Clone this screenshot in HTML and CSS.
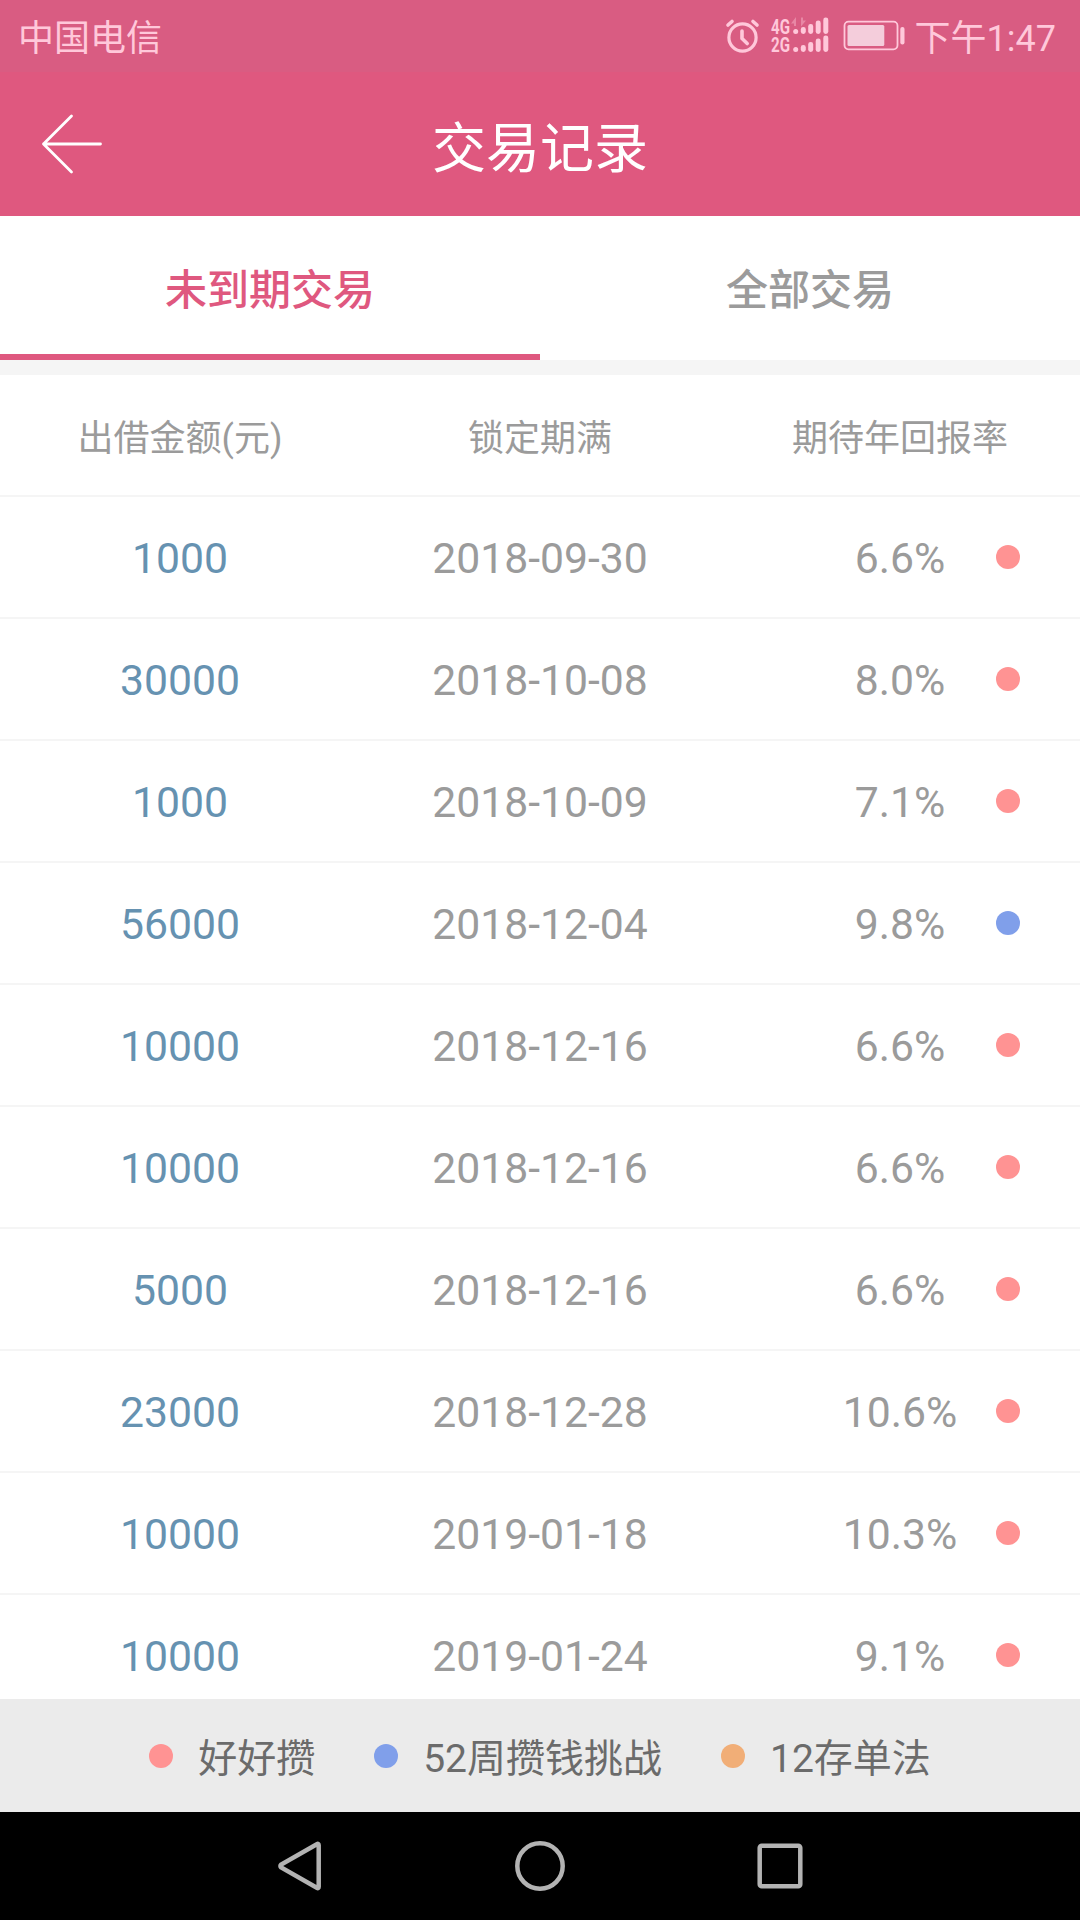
FILE: index.html
```html
<!DOCTYPE html>
<html lang="zh-CN">
<head>
<meta charset="utf-8">
<title>交易记录</title>
<link rel="stylesheet" href="styles.css">
</head>
<body>
<div class="screen">
  <div class="status">
    <span class="carrier">中国电信</span>
    <div class="status-right">
      <svg class="status-icons" width="184" height="72" viewBox="724 0 184 72">
        <g fill="none" stroke="currentColor" stroke-linecap="round" stroke-linejoin="round">
          <circle cx="742.5" cy="37.5" r="13.6" stroke-width="3.2"/>
          <path d="M742 31v7.500l5.200 5" stroke-width="3.6"/>
          <path d="M728 25l4-3.500M757 25l-4-3.500" stroke-width="3.6"/>
        </g>
        <g fill="currentColor" class="net">
          <text x="771" y="34" textLength="19" lengthAdjust="spacingAndGlyphs">4G</text>
          <text x="771" y="52" textLength="19" lengthAdjust="spacingAndGlyphs">2G</text>
        </g>
        <path d="M791 23.500l5-6.500v9h-2v-2.500zM806 20.500l-5 6v-9h2v3z" fill="currentColor" opacity=".4"/>
        <g fill="currentColor">
          <circle cx="795.7" cy="31.500" r="2.500"/><rect x="800.800" y="27" width="5" height="7" rx="2.400"/><rect x="808.200" y="24" width="5" height="10" rx="2.400"/><rect x="815.700" y="20.500" width="5" height="13.500" rx="2.400"/><rect x="823.300" y="17.500" width="5" height="16.500" rx="2.400"/>
          <circle cx="795.700" cy="49.500" r="2.500"/><rect x="800.800" y="45" width="5" height="7" rx="2.400"/><rect x="808.200" y="42" width="5" height="10" rx="2.400"/><rect x="815.700" y="38.500" width="5" height="13.500" rx="2.400"/><rect x="823.300" y="35.500" width="5" height="16.500" rx="2.400"/>
          <rect x="847.500" y="25" width="36.800" height="21" rx="1.500" fill="#f4cddb"/>
          <rect x="900.300" y="27" width="4.200" height="17.500" rx="2"/>
        </g>
        <rect x="844.500" y="21.700" width="53" height="27.600" rx="4" fill="none" stroke="currentColor" stroke-width="1.800"/>
      </svg>
      <span class="clock">下午1:47</span>
    </div>
  </div>

  <header class="titlebar">
    <svg class="back" width="62" height="62" viewBox="0 0 62 62">
      <path d="M30.500 3L2.500 31l28 28M2.500 31h57" fill="none" stroke="#fff" stroke-width="2.800" stroke-linecap="round" stroke-linejoin="round"/>
    </svg>
    <h1>交易记录</h1>
  </header>

  <nav class="tabs">
    <div class="tab active">未到期交易</div>
    <div class="tab">全部交易</div>
  </nav>

  <main class="list">
    <div class="row head"><span>出借金额(元)</span><span>锁定期满</span><span>期待年回报率</span></div>
    <div class="row"><span class="amount">1000</span><span>2018-09-30</span><span class="rate">6.6%<i class="dot red"></i></span></div>
    <div class="row"><span class="amount">30000</span><span>2018-10-08</span><span class="rate">8.0%<i class="dot red"></i></span></div>
    <div class="row"><span class="amount">1000</span><span>2018-10-09</span><span class="rate">7.1%<i class="dot red"></i></span></div>
    <div class="row"><span class="amount">56000</span><span>2018-12-04</span><span class="rate">9.8%<i class="dot blue"></i></span></div>
    <div class="row"><span class="amount">10000</span><span>2018-12-16</span><span class="rate">6.6%<i class="dot red"></i></span></div>
    <div class="row"><span class="amount">10000</span><span>2018-12-16</span><span class="rate">6.6%<i class="dot red"></i></span></div>
    <div class="row"><span class="amount">5000</span><span>2018-12-16</span><span class="rate">6.6%<i class="dot red"></i></span></div>
    <div class="row"><span class="amount">23000</span><span>2018-12-28</span><span class="rate">10.6%<i class="dot red"></i></span></div>
    <div class="row"><span class="amount">10000</span><span>2019-01-18</span><span class="rate">10.3%<i class="dot red"></i></span></div>
    <div class="row"><span class="amount">10000</span><span>2019-01-24</span><span class="rate">9.1%<i class="dot red"></i></span></div>
  </main>

  <footer class="legend">
    <div class="key"><i class="dot red"></i><span>好好攒</span></div>
    <div class="key"><i class="dot blue"></i><span>52周攒钱挑战</span></div>
    <div class="key"><i class="dot orange"></i><span>12存单法</span></div>
  </footer>

  <div class="sysnav">
    <svg width="60" height="60" viewBox="0 0 60 60"><path d="M48.700 9.200v41.600q0 2-1.900 1L11.200 31.500q-1.600-1.500 0-3L46.800 8.200q1.900-1 1.900 1z"/></svg>
    <svg width="60" height="60" viewBox="0 0 60 60"><circle cx="30" cy="30" r="22.700"/></svg>
    <svg width="60" height="60" viewBox="0 0 60 60"><rect x="9.700" y="9.700" width="40.600" height="40.600" rx="2"/></svg>
  </div>
</div>
</body>
</html>
```
FILE: styles.css
```css
* { box-sizing: border-box; }

body {
  margin: 0;
  font-family: Roboto, "Noto Sans CJK SC", sans-serif;
  background: #fff;
}

.screen {
  width: 1080px;
  height: 1920px;
  display: flex;
  flex-direction: column;
  overflow: hidden;
}

.status {
  flex: none;
  height: 72px;
  padding: 0 24px 0 18px;
  display: flex;
  align-items: center;
  justify-content: space-between;
  background: #d95c82;
  color: #ffc8da;
  font-size: 36px;
  line-height: 66px;
}

.status-right { display: flex; align-items: center; gap: 7px; }
.net { font-size: 21px; font-weight: 700; }
.carrier { padding-top: 6px; }
.clock { padding-top: 5px; }

.titlebar {
  flex: none;
  height: 144px;
  padding: 0 41px;
  display: grid;
  grid-template-columns: 62px 1fr 62px;
  align-items: center;
  background: #df587f;
  color: #fff;
}

.titlebar h1 {
  margin: 0;
  padding-top: 11px;
  font-size: 54px;
  font-weight: 400;
  line-height: 80px;
  text-align: center;
}

.tabs {
  flex: none;
  height: 159px;
  display: flex;
  border-bottom: 15px solid #f5f5f5;
}

.tab {
  flex: 1;
  padding-top: 8px;
  border-bottom: 6px solid transparent;
  font-size: 42px;
  font-weight: 500;
  line-height: 134px;
  text-align: center;
  color: #9b9b9b;
}

.tab.active { color: #df587f; border-color: #df587f; }

.list { flex: 1; min-height: 0; overflow: hidden; }

.row {
  height: 122px;
  display: grid;
  grid-template-columns: repeat(3, 1fr);
  border-bottom: 2px solid #f5f5f5;
  font-size: 42.7px;
  line-height: 122px;
  text-align: center;
  color: #9b9b9b;
}

.row.head { font-size: 36px; line-height: 128px; }
.amount { color: #6692b1; }
.rate { position: relative; }

.dot {
  flex: none;
  width: 24px;
  height: 24px;
  border-radius: 50%;
}

.rate .dot { position: absolute; right: 60px; top: 48px; }
.red { background: #ff9393; }
.blue { background: #809fea; }
.orange { background: #f1ae77; }

.legend {
  flex: none;
  height: 113px;
  display: flex;
  align-items: center;
  justify-content: center;
  gap: 59px;
  background: #ebebeb;
  color: #6b6b6b;
  font-size: 39px;
  line-height: 105px;
}

.key { display: flex; align-items: center; gap: 25px; }
.key span { padding-top: 8px; }

.sysnav {
  flex: none;
  height: 108px;
  display: flex;
  align-items: center;
  justify-content: center;
  gap: 180px;
  background: #000;
}

.sysnav svg { fill: none; stroke: #b3b3b3; stroke-width: 4.5; }
```
